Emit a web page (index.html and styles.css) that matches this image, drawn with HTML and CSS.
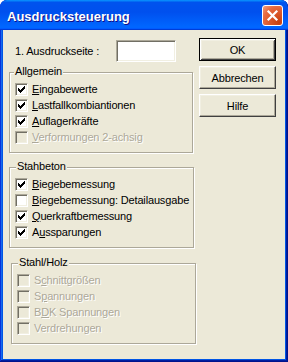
FILE: index.html
```html
<!DOCTYPE html>
<html>
<head>
<meta charset="utf-8">
<title>Ausdrucksteuerung</title>
<link rel="stylesheet" href="styles.css">
</head>
<body>
<div class="window">
  <div class="titlebar">
    <span class="title">Ausdrucksteuerung</span>
    <span class="close">
      <svg width="19" height="19" viewBox="0 0 19 19"><path d="M5.5 5.5L13.5 13.5M13.5 5.5L5.5 13.5" stroke="#fff" stroke-width="2.2" stroke-linecap="square"/></svg>
    </span>
  </div>
  <div class="client">
    <div class="main">
      <div class="pagerow">
        <span class="pagelabel">1. Ausdruckseite :</span>
        <span class="textbox"></span>
      </div>

      <div class="group g1">
        <span class="legend">Allgemein</span>
        <div class="row"><span class="cb"><svg width="7" height="7" viewBox="0 0 7 7"><path d="M6 0h1v3h-1zM5 1h1v3h-1zM4 2h1v3h-1zM3 3h1v3h-1zM2 4h1v3h-1zM1 3h1v3h-1zM0 2h1v3h-1z"/></svg></span><span class="lbl"><u>E</u>ingabewerte</span></div>
        <div class="row"><span class="cb"><svg width="7" height="7" viewBox="0 0 7 7"><path d="M6 0h1v3h-1zM5 1h1v3h-1zM4 2h1v3h-1zM3 3h1v3h-1zM2 4h1v3h-1zM1 3h1v3h-1zM0 2h1v3h-1z"/></svg></span><span class="lbl"><u>L</u>astfallkombiantionen</span></div>
        <div class="row"><span class="cb"><svg width="7" height="7" viewBox="0 0 7 7"><path d="M6 0h1v3h-1zM5 1h1v3h-1zM4 2h1v3h-1zM3 3h1v3h-1zM2 4h1v3h-1zM1 3h1v3h-1zM0 2h1v3h-1z"/></svg></span><span class="lbl"><u>A</u>uflagerkräfte</span></div>
        <div class="row disabled"><span class="cb"></span><span class="lbl"><u>V</u>erformungen 2-achsig</span></div>
      </div>

      <div class="group g2">
        <span class="legend">Stahbeton</span>
        <div class="row"><span class="cb"><svg width="7" height="7" viewBox="0 0 7 7"><path d="M6 0h1v3h-1zM5 1h1v3h-1zM4 2h1v3h-1zM3 3h1v3h-1zM2 4h1v3h-1zM1 3h1v3h-1zM0 2h1v3h-1z"/></svg></span><span class="lbl"><u>B</u>iegebemessung</span></div>
        <div class="row"><span class="cb"></span><span class="lbl"><u>B</u>iegebemessung: Detailausgabe</span></div>
        <div class="row"><span class="cb"><svg width="7" height="7" viewBox="0 0 7 7"><path d="M6 0h1v3h-1zM5 1h1v3h-1zM4 2h1v3h-1zM3 3h1v3h-1zM2 4h1v3h-1zM1 3h1v3h-1zM0 2h1v3h-1z"/></svg></span><span class="lbl"><u>Q</u>uerkraftbemessung</span></div>
        <div class="row"><span class="cb"><svg width="7" height="7" viewBox="0 0 7 7"><path d="M6 0h1v3h-1zM5 1h1v3h-1zM4 2h1v3h-1zM3 3h1v3h-1zM2 4h1v3h-1zM1 3h1v3h-1zM0 2h1v3h-1z"/></svg></span><span class="lbl">A<u>u</u>ssparungen</span></div>
      </div>

      <div class="group g3">
        <span class="legend">Stahl/Holz</span>
        <div class="row disabled"><span class="cb"></span><span class="lbl">S<u>c</u>hnittgrößen</span></div>
        <div class="row disabled"><span class="cb"></span><span class="lbl">S<u>p</u>annungen</span></div>
        <div class="row disabled"><span class="cb"></span><span class="lbl">B<u>D</u>K Spannungen</span></div>
        <div class="row disabled"><span class="cb"></span><span class="lbl">Verdrehungen</span></div>
      </div>
    </div>

    <div class="buttons">
      <div class="btn default">OK</div>
      <div class="btn">Abbrechen</div>
      <div class="btn">Hilfe</div>
    </div>
  </div>
</div>
</body>
</html>
```
FILE: styles.css
```css
* { box-sizing: border-box; }
html, body { margin: 0; padding: 0; background: #fff; }
body {
  width: 288px;
  height: 362px;
  overflow: hidden;
  font-family: "Liberation Sans", Arial, sans-serif;
  font-size: 11px;
  color: #000;
}

.window {
  width: 288px;
  height: 362px;
  display: flex;
  flex-direction: column;
  background: #0055e5;
  border-radius: 7px 7px 0 0;
  overflow: hidden;
  box-shadow: inset -1px -1px #00138c, inset 1px 1px #0831d9, inset -2px -2px #001ea0, inset 2px 2px #166aee;
}

.titlebar {
  height: 30px;
  flex: none;
  display: flex;
  align-items: center;
  justify-content: space-between;
  padding: 2px 5px 0 7px;
  background: linear-gradient(180deg, #0997ff, #0053ee 8%, #0050ee 40%, #0066ff 88%, #0066ff 93%, #005bff 95%, #003dd7 96%, #003dd7);
  border-radius: 7px 7px 0 0;
}

.title {
  color: #fff;
  font-weight: bold;
  font-size: 13px;
  text-shadow: 1px 1px 0 #0f1089;
}

.close {
  width: 21px;
  height: 21px;
  border: 1px solid #fff;
  border-radius: 3px;
  background: radial-gradient(circle at 85% 85%, #c8400f 0%, #dc5a2c 45%, #e66b42 70%, #f0a080 100%);
  display: flex;
  align-items: center;
  justify-content: center;
  margin-top: -1px;
}
.close svg { display: block; }

.client {
  flex: 1;
  display: flex;
  margin: 0 3px 3px 3px;
  background: #ece9d8;
  letter-spacing: -0.15px;
}

.main {
  margin-left: 6px;
  width: 187px;
  display: flex;
  flex-direction: column;
}

.pagerow {
  display: flex;
  align-items: center;
  margin-top: 10px;
  padding-left: 6px;
  height: 22px;
}
.pagelabel { width: 101px; }
.textbox {
  width: 60px;
  height: 22px;
  background: #fff;
  border: 1px solid;
  border-color: #aca899 #fff #fff #aca899;
  box-shadow: inset 1px 1px #716f64, inset -1px -1px #f1efe2;
}

.group {
  position: relative;
  border: 1px solid #aca899;
  box-shadow: inset 1px 1px #fff, 1px 1px #fff;
  padding: 8px 0 7px 5px;
  display: flex;
  flex-direction: column;
}
.g1 { margin-top: 10px; width: 184px; }
.g2 { margin-top: 14px; width: 185px; }
.g3 { margin-top: 15px; width: 185px; margin-left: 2px; }

.legend {
  position: absolute;
  top: -8px;
  left: 4px;
  padding: 0 1px;
  line-height: 13px;
  background: #ece9d8;
}
.g2 .legend, .g3 .legend { left: 6px; }

.row {
  display: flex;
  align-items: center;
  height: 16px;
  white-space: nowrap;
}

.cb {
  width: 13px;
  height: 13px;
  flex: none;
  margin-right: 4px;
  border: 1px solid;
  border-color: #aca899 #fff #fff #aca899;
  box-shadow: inset 1px 1px #716f64, inset -1px -1px #f1efe2;
  background: #fff;
  display: flex;
  align-items: center;
  justify-content: center;
}
.cb svg { display: block; fill: #000; shape-rendering: crispEdges; }

.disabled .cb { background: #ece9d8; }
.disabled .lbl { color: #aca899; text-shadow: 1px 1px 0 #fff; }

.buttons {
  margin-left: 3px;
  padding-top: 8px;
  display: flex;
  flex-direction: column;
  gap: 5px;
}

.btn {
  width: 77px;
  height: 23px;
  display: flex;
  align-items: center;
  justify-content: center;
  background: #ece9d8;
  border: 1px solid;
  border-color: #fff #404040 #404040 #fff;
  box-shadow: inset -1px -1px #aca899, inset 1px 1px #f1efe2;
}
.btn.default {
  border-color: #000;
  box-shadow: inset 1px 1px #fff, inset -1px -1px #404040, inset 2px 2px #f1efe2, inset -2px -2px #aca899;
}
```
